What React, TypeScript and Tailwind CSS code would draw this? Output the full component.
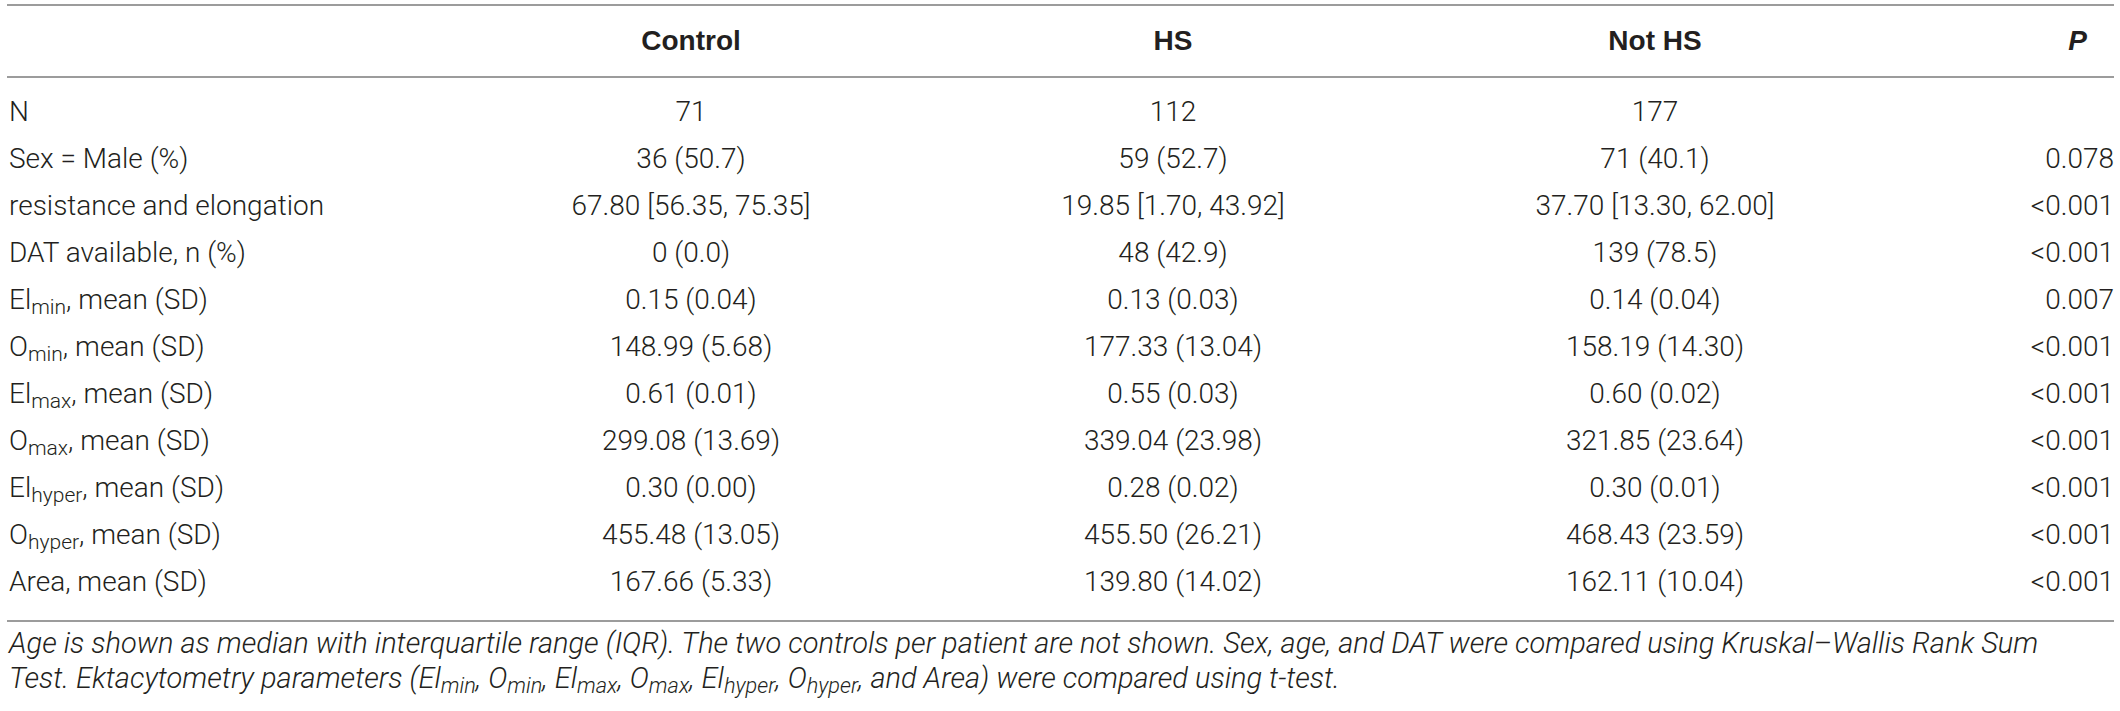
import type { ReactNode } from "react";

type Row = {
  label: ReactNode;
  control: string;
  hs: string;
  notHs: string;
  p: string;
};

const sub = (base: string, s: string, rest = ", mean (SD)") => (
  <>
    {base}
    <sub>{s}</sub>
    {rest}
  </>
);

const rows: Row[] = [
  { label: "N", control: "71", hs: "112", notHs: "177", p: "" },
  { label: "Sex = Male (%)", control: "36 (50.7)", hs: "59 (52.7)", notHs: "71 (40.1)", p: "0.078" },
  { label: "resistance and elongation", control: "67.80 [56.35, 75.35]", hs: "19.85 [1.70, 43.92]", notHs: "37.70 [13.30, 62.00]", p: "<0.001" },
  { label: "DAT available, n (%)", control: "0 (0.0)", hs: "48 (42.9)", notHs: "139 (78.5)", p: "<0.001" },
  { label: sub("El", "min"), control: "0.15 (0.04)", hs: "0.13 (0.03)", notHs: "0.14 (0.04)", p: "0.007" },
  { label: sub("O", "min"), control: "148.99 (5.68)", hs: "177.33 (13.04)", notHs: "158.19 (14.30)", p: "<0.001" },
  { label: sub("El", "max"), control: "0.61 (0.01)", hs: "0.55 (0.03)", notHs: "0.60 (0.02)", p: "<0.001" },
  { label: sub("O", "max"), control: "299.08 (13.69)", hs: "339.04 (23.98)", notHs: "321.85 (23.64)", p: "<0.001" },
  { label: sub("El", "hyper"), control: "0.30 (0.00)", hs: "0.28 (0.02)", notHs: "0.30 (0.01)", p: "<0.001" },
  { label: sub("O", "hyper"), control: "455.48 (13.05)", hs: "455.50 (26.21)", notHs: "468.43 (23.59)", p: "<0.001" },
  { label: "Area, mean (SD)", control: "167.66 (5.33)", hs: "139.80 (14.02)", notHs: "162.11 (10.04)", p: "<0.001" },
];

export default function App() {
  return (
    <div className="w-[2120px] h-[711px] bg-white pl-[7px] pr-[6px] pt-[4px] font-['Roboto','Liberation_Sans',sans-serif] font-light text-[28px] text-[#231f20]">
      {/* header */}
      <div className="grid grid-cols-[443px_482px_482px_482px_1fr] h-[74px] items-center border-y-2 border-[#9c9c9c] font-['Liberation_Sans',sans-serif] font-bold">
        <div />
        <div className="text-center">Control</div>
        <div className="text-center">HS</div>
        <div className="text-center">Not HS</div>
        <div className="text-right pr-[27px] italic">P</div>
      </div>

      {/* body */}
      <div className="pt-[10px] pb-[15px] border-b-2 border-[#9c9c9c]">
        {rows.map((r, i) => (
          <div key={i} className="grid grid-cols-[443px_482px_482px_482px_1fr] h-[47px] items-center whitespace-nowrap">
            <div className="pl-[2px]">{r.label}</div>
            <div className="text-center">{r.control}</div>
            <div className="text-center">{r.hs}</div>
            <div className="text-center">{r.notHs}</div>
            <div className="text-right">{r.p}</div>
          </div>
        ))}
      </div>

      {/* footnote */}
      <p className="mt-[4px] pl-[2px] italic text-[29px] leading-[35px] whitespace-nowrap">
        Age is shown as median with interquartile range (IQR). The two controls per patient are not shown. Sex, age, and DAT were compared using Kruskal–Wallis Rank Sum
        <br />
        Test. Ektacytometry parameters (El<sub>min</sub>, O<sub>min</sub>, El<sub>max</sub>, O<sub>max</sub>, El<sub>hyper</sub>, O<sub>hyper</sub>, and Area) were compared using t-test.
      </p>
    </div>
  );
}
